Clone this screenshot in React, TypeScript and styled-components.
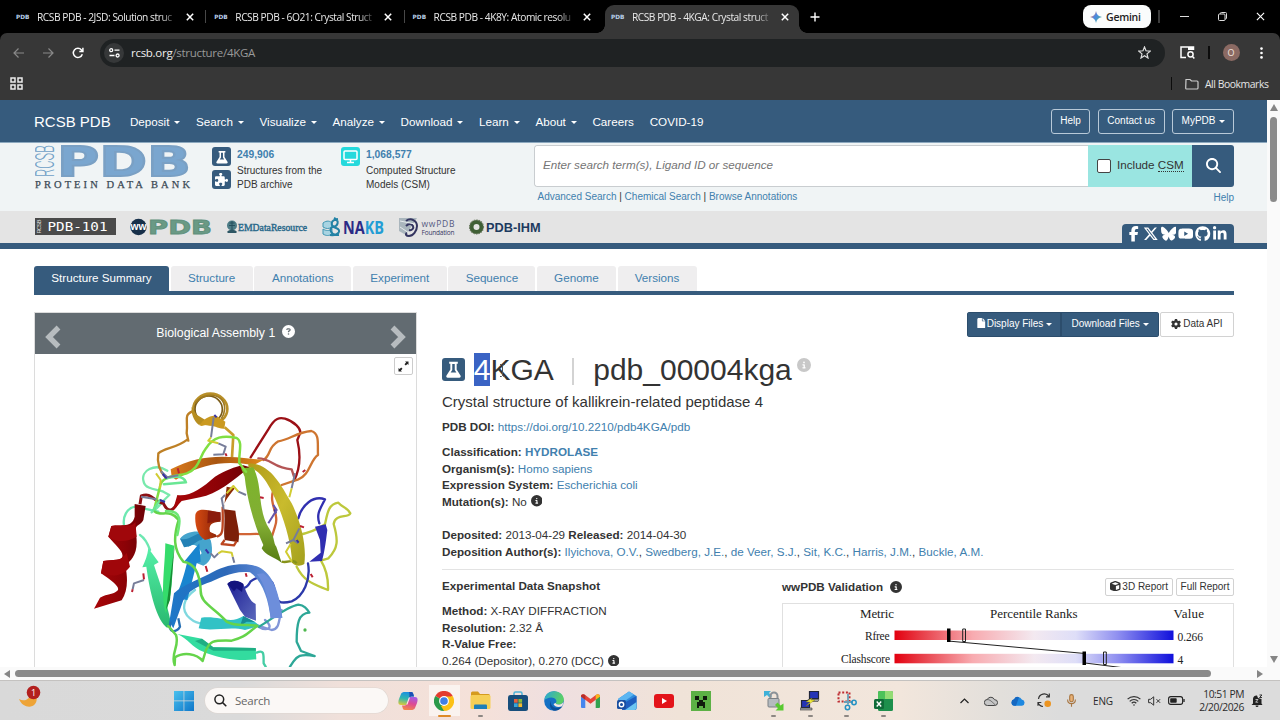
import React, { ReactNode } from "react";
import styled, { createGlobalStyle, css } from "styled-components";
import {
  FaBluesky,
  FaCircleInfo,
  FaCircleQuestion,
  FaCube,
  FaFacebookF,
  FaFile,
  FaGear,
  FaGithub,
  FaLinkedinIn,
  FaMagnifyingGlass,
  FaPuzzlePiece,
  FaXTwitter,
  FaYoutube,
} from "react-icons/fa6";

const colors = {
  navy: "#365b7d",
  link: "#4180ae",
  text: "#333",
  chrome: "#373737",
};

const browserTabs = [
  "RCSB PDB - 2JSD: Solution struc",
  "RCSB PDB - 6O21: Crystal Struct",
  "RCSB PDB - 4K8Y: Atomic resolu",
  "RCSB PDB - 4KGA: Crystal struct",
];

const navItems = [
  { title: "Deposit", menu: true },
  { title: "Search", menu: true },
  { title: "Visualize", menu: true },
  { title: "Analyze", menu: true },
  { title: "Download", menu: true },
  { title: "Learn", menu: true },
  { title: "About", menu: true },
  { title: "Careers", menu: false },
  { title: "COVID-19", menu: false },
];

const pageTabs = [
  { title: "Structure Summary", width: 135 },
  { title: "Structure", width: 82 },
  { title: "Annotations", width: 97 },
  { title: "Experiment", width: 94 },
  { title: "Sequence", width: 87 },
  { title: "Genome", width: 79 },
  { title: "Versions", width: 79 },
];

const authors = [
  "Ilyichova, O.V.",
  "Swedberg, J.E.",
  "de Veer, S.J.",
  "Sit, K.C.",
  "Harris, J.M.",
  "Buckle, A.M.",
];

/* ---------- small drawings ---------- */

const CloseIcon = ({ size = 8, stroke = 1.5 }: { size?: number; stroke?: number }) => (
  <svg width={size} height={size} viewBox="0 0 8 8">
    <path d="M.8.8 7.2 7.2M7.2.8.8 7.2" stroke="#fff" strokeWidth={stroke} fill="none" />
  </svg>
);

const FlaskIcon = ({ size }: { size: number }) => (
  <svg width={size} height={size} viewBox="0 0 24 24">
    <path
      d="M7.5 4h9v2h-1.2v6l4 6.2c.7 1.3 0 2.3-1.3 2.3H6c-1.300 0-2-1-1.300-2.300l4-6.200V6H7.500z"
      fill="#fff"
    />
    <path d="M10.700 6.200h2.600v6.300l1.700 2.700H9l1.700-2.700z" fill={colors.navy} />
  </svg>
);

const Chevron = ({ flip }: { flip?: boolean }) => (
  <svg width="18" height="24" viewBox="0 0 18 24">
    <path
      d={flip ? "M3.500 2.500 13 12 3.500 21.500" : "M14.500 2.500 5 12l9.500 9.500"}
      stroke="#b7bcbf"
      strokeWidth="5.400"
      fill="none"
    />
  </svg>
);

const Protein = () => (
  <svg width="280" height="287" viewBox="0 0 840 861" fill="none" strokeLinejoin="round">
    <defs>
      <linearGradient id="helix" x1="0" x2="1">
        <stop offset="0" stopColor="#a80508" />
        <stop offset=".6" stopColor="#8c0206" />
        <stop offset="1" stopColor="#6c0206" />
      </linearGradient>
      <linearGradient id="orange" x1="0" x2="1">
        <stop offset="0" stopColor="#d87a1c" />
        <stop offset=".5" stopColor="#a95510" />
        <stop offset="1" stopColor="#e08a1a" />
      </linearGradient>
      <linearGradient id="blue" x1="0" x2="1">
        <stop offset="0" stopColor="#1d78c8" />
        <stop offset=".5" stopColor="#2d68b8" />
        <stop offset="1" stopColor="#7596e2" />
      </linearGradient>
      <linearGradient id="olive" x1="0" y1="0" x2="1" y2="1">
        <stop offset="0" stopColor="#b09a18" />
        <stop offset=".5" stopColor="#c9bb2d" />
        <stop offset="1" stopColor="#a3a01d" />
      </linearGradient>
      <linearGradient id="lime" x1="0" y1="0" x2="0" y2="1">
        <stop offset="0" stopColor="#7cb52c" />
        <stop offset=".6" stopColor="#82ad33" />
        <stop offset="1" stopColor="#567b12" />
      </linearGradient>
      <linearGradient id="mint" x1="0" y1="0" x2="0" y2="1">
        <stop offset="0" stopColor="#55efa8" />
        <stop offset="1" stopColor="#28b86e" />
      </linearGradient>
      <linearGradient id="rust" x1="0" x2="1">
        <stop offset="0" stopColor="#d54a12" />
        <stop offset="1" stopColor="#852006" />
      </linearGradient>
      <linearGradient id="indigo" x1="0" y1="0" x2="1" y2="1">
        <stop offset="0" stopColor="#1c1c94" />
        <stop offset="1" stopColor="#5b69bc" />
      </linearGradient>
    </defs>

    {/* loops lying behind the sheets */}
    <g strokeWidth="7" strokeLinecap="round">
      <path d="M262 272C225 248 180 272 191 305C196 328 230 328 250 335L268 345C240 370 235 385 215 397" stroke="#78e9ac" />
      <path d="M235 395L165 380C140 385 128 410 132 435M180 465C195 475 203 490 210 510" stroke="#6de8b2" />
      <path d="M345 630C310 655 300 690 330 715C345 728 355 730 368 730" stroke="#7fd8df" />
      <path d="M555 720C585 745 560 755 535 740M605 690C595 720 600 748 575 750L530 735" stroke="#8296d8" />
      <path d="M512 232L565 148C585 112 600 112 615 116C645 126 662 145 661 158L652 180C665 235 656 275 642 302" stroke="#9b1016" />
      <path d="M550 240C575 225 560 205 595 184C630 178 650 157 694 153C720 162 712 190 714 225C690 240 690 285 655 298L605 315" stroke="#ce7530" />
      <path d="M535 235C575 235 580 265 635 268L642 290" stroke="#b45555" />
      <path d="M580 330C565 375 600 400 585 440L575 472C550 455 510 465 475 462" stroke="#d16536" />
      <path d="M655 415C665 375 700 345 735 358C722 385 708 400 718 430" stroke="#3130b0" />
      <path d="M654 465C685 460 710 450 735 433C742 400 745 372 775 368C790 385 800 380 811 400C805 415 765 400 761 432C775 480 775 505 745 535L723 542C743 575 745 605 744 630C710 615 675 610 650 560" stroke="#bdc83c" />
      <path d="M684 550C693 600 670 650 635 664C590 675 592 660 584 632C580 590 545 580 512 604C500 628 485 630 465 618" stroke="#2c39aa" />
      <path d="M537 740C580 715 620 680 655 674C673 676 680 685 688 698C655 700 650 730 650 785L663 813L704 828C660 820 650 830 640 845L630 860" stroke="#2da797" />
      <path d="M530 818C555 808 550 825 551 850L557 860" stroke="#45cda4" />
      <path d="M325 182L320 160C325 120 310 105 337 94M323 178C285 207 255 202 235 220C230 250 240 275 258 294" stroke="#be8026" />
    </g>

    {/* top coil */}
    <ellipse cx="391" cy="87" rx="51" ry="46" stroke="#b88f28" strokeWidth="8" />
    <ellipse cx="386" cy="88" rx="41" ry="40" stroke="#7b5c18" strokeWidth="5" />
    <path d="M346 70C365 45 400 38 422 56C440 72 435 100 424 116" stroke="#a07a20" strokeWidth="5" />
    <path d="M335 80C333 100 340 120 356 134C366 136 375 132 380 122L350 104Z" fill="#b78e20" />
    <path d="M358 136C370 118 390 104 410 108L436 125L433 146C410 148 395 128 365 138Z" fill="#ca9920" />
    <path d="M434 142L460 165L456 232" stroke="#c99d2b" strokeWidth="8" />

    {/* left red helix */}
    <path d="M164 372L197 378L190 420C180 438 169 432 166 450C180 520 155 538 136 557C145 600 142 635 125 661L42 686L60 653C85 640 95 645 110 634C125 625 100 605 63 580L70 543L122 538C140 520 110 500 85 470L94 438C125 432 155 445 164 410Z" fill="url(#helix)" />
    <path d="M94 438C125 432 155 445 166 425L170 470C145 485 110 490 85 470Z" fill="#a0070b" />
    <path d="M70 543C100 538 125 545 140 518L150 560C125 593 90 590 63 580Z" fill="#a0060a" />
    <path d="M180 373L184 348C215 335 220 365 250 370C265 400 280 395 294 365" stroke="#8c1015" strokeWidth="9" />

    {/* mint and green strands */}
    <path d="M205 505L236 547L222 555C240 610 260 665 272 725L262 744C230 720 210 640 199 560L187 562C195 545 203 525 205 505Z" fill="url(#mint)" />
    <path d="M256 490L283 497C275 560 280 600 270 650L258 700C240 650 255 560 256 490Z" fill="#35dc6b" />
    <path d="M258 690L285 485L270 660Z" fill="#178d35" />
    <path d="M292 762L366 776L400 802L527 804L529 838C470 845 410 832 370 815C335 803 325 776 292 762Z" fill="#33dc9f" />
    <path d="M345 783L366 776L400 802L527 804L528 812L400 812Z" fill="#1fae83" />
    <path d="M364 713C420 706 450 735 490 708L525 726L540 738L495 750C450 738 400 755 356 745Z" fill="#32c2c5" />
    <path d="M490 708L525 726L500 725L480 738Z" fill="#168b96" />

    {/* blue sheet */}
    <path d="M300 476C315 455 350 450 375 458L392 480C400 510 398 545 370 557L340 545L365 520C355 495 340 490 325 500Z" fill="#45a4cd" />
    <path d="M300 476C335 485 345 450 378 462L365 480C350 480 340 500 312 502Z" fill="#2381b5" />
    <path d="M358 490L362 545L350 550L322 660L285 655C310 600 315 570 322 545L314 543Z" fill="#1985cf" />
    <path d="M282 640C310 612 360 598 400 575C450 548 520 545 550 570C590 600 600 665 607 713L572 715C565 655 545 600 510 577C460 570 420 595 380 610C340 625 315 640 305 675L280 745L268 725Z" fill="url(#blue)" />
    <path d="M550 580C590 610 600 665 607 713L572 715C565 655 555 610 530 582Z" fill="#6d8edb" />
    <path d="M272 725C260 760 290 760 300 740L295 715" stroke="#266fb4" strokeWidth="7" />
    <path d="M442 612C455 596 475 602 490 612C500 640 510 665 527 672L528 722L495 710L480 690L455 640Z" fill="url(#indigo)" />
    <path d="M442 612C455 596 480 602 490 612L486 636L470 625L462 634Z" fill="#14147e" />

    {/* rust helix in the middle */}
    <path d="M346 405C350 385 370 385 420 398L422 425C395 425 385 435 390 455C400 462 410 460 411 470L375 480C350 465 344 430 346 405Z" fill="url(#rust)" />
    <path d="M384 392L422 397L422 420L382 430Z" fill="#8b1b0b" />
    <path d="M432 388L466 392C470 430 482 455 475 487L434 480C430 455 436 430 432 388Z" fill="#7c1f08" />
    <path d="M411 470C432 465 428 445 428 380M434 480L425 492L462 496L470 483" stroke="#bc4620" strokeWidth="7" />

    {/* upper sheet */}
    <path d="M272 268C340 232 400 226 470 232L550 240L520 256C440 240 370 252 310 286L288 299L275 290Z" fill="url(#orange)" />
    <path d="M510 262C460 300 410 345 360 352L305 363L278 393L292 345C330 350 365 325 405 290C435 272 465 260 490 256Z" fill="url(#helix)" />
    <path d="M465 325C440 355 430 370 431 390L440 320Z" fill="#8d2c08" />
    <path d="M505 250C570 250 600 310 635 370C665 430 680 500 673 552C660 560 645 558 636 548C635 480 600 380 570 325C550 285 525 265 505 262Z" fill="url(#olive)" />
    <path d="M483 265L520 262C550 320 530 390 570 450C585 475 580 490 589 500L605 548C580 530 555 525 545 505L550 495C520 430 500 350 494 290Z" fill="url(#lime)" />
    <path d="M737 433L742 450C737 490 733 520 726 543L688 545L722 518L720 480L705 440Z" fill="#302eb1" />
    <path d="M605 545C625 550 640 535 650 550" stroke="#87931a" strokeWidth="7" />

    {/* long lime thread */}
    <g strokeWidth="7.500" strokeLinecap="round">
      <path d="M498 275L478 250C475 220 490 185 470 174C430 165 400 170 378 205C355 235 360 265 320 280C290 290 245 285 240 320L222 390" stroke="#80df43" />
      <path d="M225 395C245 410 270 385 296 420C280 470 280 510 310 545C350 550 360 590 362 630C360 670 400 680 440 725C470 743 505 730 532 738C500 760 500 770 455 782C395 780 390 785 378 810L368 843C350 820 310 815 285 832L284 855C270 820 300 800 288 765L265 738" stroke="#65d44a" />
      <path d="M252 313L318 307C310 286 280 288 260 295M220 390L240 360" stroke="#69e794" />
      <path d="M258 393C310 390 300 430 292 465" stroke="#6ce775" />
    </g>

    {/* ligands and side chains */}
    <g strokeWidth="6">
      <path d="M401 112L393 172M415 190L437 200L430 223L400 224M243 274L262 292L295 286M475 335L498 345M435 345L425 355L431 388M645 280L635 325M658 445L640 480L655 490M640 480L618 490M183 350L230 358M192 600L162 610L158 628M392 520L403 532L415 520M458 530L463 548" stroke="#777d99" />
      <path d="M393 172L385 182L415 190M228 280L242 300L240 325M440 340L460 318L475 335M635 325L628 352M632 492L618 515L636 545M415 520L425 514L455 518L458 530" stroke="#d1cc32" />
      <path d="M293 265L297 280M436 220L440 228M540 352L551 354M660 438L672 442M190 580L192 598M158 628L156 636M377 558L382 575M497 580L500 590M668 276L676 270M692 582L698 592" stroke="#bb2032" />
      <path d="M403 105L410 112M377 508L386 520M583 388L588 400M248 282L260 296M650 480L656 488M240 360L255 366" stroke="#3632a7" />
      <path d="M565 430L590 390L580 375" stroke="#6554aa" />
    </g>
    <circle cx="675" cy="750" r="5" fill="#50b850" />
  </svg>
);

const PercentileChart = () => (
  <svg width="451" height="64" viewBox="0 0 451 64" fontFamily="'Liberation Serif', serif" fill="#222">
    <defs>
      <linearGradient id="rank" x1="0" x2="1">
        <stop offset="0" stopColor="#e3000f" />
        <stop offset=".1" stopColor="#e8404a" />
        <stop offset=".28" stopColor="#f8abb0" />
        <stop offset=".5" stopColor="#f3e9f0" />
        <stop offset=".65" stopColor="#dedef8" />
        <stop offset=".8" stopColor="#8f8ff0" />
        <stop offset="1" stopColor="#1010dc" />
      </linearGradient>
    </defs>
    <g fontSize="13">
      <text x="77" y="14" textLength="34">Metric</text>
      <text x="207" y="14" textLength="87.500">Percentile Ranks</text>
      <text x="390.500" y="14" textLength="30.500">Value</text>
    </g>
    <g fontSize="11.500">
      <text x="82" y="36.300" textLength="24.500">Rfree</text>
      <text x="58" y="59.300" textLength="49">Clashscore</text>
      <text x="394.500" y="36.500" textLength="25.500">0.266</text>
      <text x="394.500" y="59.500">4</text>
    </g>
    <rect x="111.500" y="26.500" width="279" height="9.500" fill="url(#rank)" />
    <rect x="111.500" y="49.800" width="279" height="9.500" fill="url(#rank)" />
    <path d="M165 37 302 49.500M302 59 342 64" stroke="#222" strokeWidth="1" />
    <path d="M164 24.500h3.500v13.500H164zM299.500 47.500h3.500V61h-3.500z" fill="#000" />
    <path d="M179.700 25h2.800v12.500h-2.800zM320.500 48h2.800v12.500h-2.800z" fill="none" stroke="#222" strokeWidth="1" />
  </svg>
);

/* ---------- browser chrome ---------- */

const BrowserTop = () => (
  <>
    <TabStrip>
      {browserTabs.map((title, i) => (
        <BrowserTab key={title} $active={i === 3} $divider={i < 2}>
          <Favicon>PDB</Favicon>
          <TabTitle>{title}</TabTitle>
          <CloseIcon />
        </BrowserTab>
      ))}
      <NewTab>
        <svg width="10" height="10" viewBox="0 0 10 10">
          <path d="M5 .5v9M.5 5h9" stroke="#fff" strokeWidth="1.400" />
        </svg>
      </NewTab>
      <WindowControls>
        <GeminiButton>
          <svg width="12" height="12" viewBox="0 0 12 12">
            <defs>
              <linearGradient id="gem" x1="0" y1="0" x2="1" y2=".7">
                <stop offset=".2" stopColor="#e8795c" />
                <stop offset=".5" stopColor="#4787e6" />
                <stop offset="1" stopColor="#4fae94" />
              </linearGradient>
            </defs>
            <path d="M6 0c.5 3.500 2.500 5.500 6 6-3.500.5-5.500 2.500-6 6-.5-3.500-2.500-5.500-6-6 3.500-.5 5.500-2.500 6-6z" fill="url(#gem)" />
          </svg>
          Gemini
        </GeminiButton>
        <ChromeDivider $color="#3c3c3c" />
        <WindowButton>
          <svg width="9" height="9" viewBox="0 0 9 9"><path d="M0 4.500h9" stroke="#ddd" /></svg>
        </WindowButton>
        <WindowButton>
          <svg width="9" height="9" viewBox="0 0 9 9" fill="none" stroke="#ddd">
            <rect x=".5" y="2" width="6.500" height="6.500" rx="1" />
            <path d="M2.300 2V1.500a1 1 0 0 1 1-1h4.200a1 1 0 0 1 1 1V6a1 1 0 0 1-1 1H7" />
          </svg>
        </WindowButton>
        <WindowButton><CloseIcon size={9} stroke={1} /></WindowButton>
      </WindowControls>
    </TabStrip>

    <Toolbar>
      <ToolIcon>
        <svg width="11" height="10" viewBox="0 0 11 10" fill="none" stroke="#898989" strokeWidth="1.200">
          <path d="M11 5H1M5.500.5 1 5l4.500 4.500" />
        </svg>
      </ToolIcon>
      <ToolIcon>
        <svg width="11" height="10" viewBox="0 0 11 10" fill="none" stroke="#898989" strokeWidth="1.200">
          <path d="M0 5h10M5.500.5 10 5 5.500 9.500" />
        </svg>
      </ToolIcon>
      <ToolIcon>
        <svg width="12" height="12" viewBox="0 0 12 12" fill="none" stroke="#fff" strokeWidth="1.500">
          <path d="M10.300 7.300A4.600 4.600 0 1 1 9.500 3L10.700 4.200M10.900.800V4.400H7.300" />
        </svg>
      </ToolIcon>
      <AddressBar>
        <SiteInfo>
          <svg width="11" height="10" viewBox="0 0 11 10" fill="none" stroke="#fff" strokeWidth="1.300">
            <circle cx="2.200" cy="2.200" r="1.500" />
            <path d="M5.500 2.200H10.500M.5 7.500h5" />
            <circle cx="8.600" cy="7.500" r="1.500" />
          </svg>
        </SiteInfo>
        <Url>
          rcsb.org<span>/structure/4KGA</span>
        </Url>
        <svg width="13" height="13" viewBox="0 0 13 13" fill="none" stroke="#ddd" strokeWidth="1.200">
          <path d="m6.500 1 1.500 3.800 4.200.3L9 7.900l1 4.100-3.500-2.300L3 12l1-4.100L.8 5.100 5 4.800z" />
        </svg>
      </AddressBar>
      <ToolbarEnd>
        <svg width="15" height="13" viewBox="0 0 15 13" fill="none" stroke="#fff" strokeWidth="1.500">
          <path d="M6 11.500H1V1h12.500v3" />
          <path d="M8 1h6v3H8z" fill="#fff" stroke="none" />
          <circle cx="10.500" cy="8.300" r="2.600" />
          <path d="m12.300 10.300 2 2.200" />
        </svg>
        <ChromeDivider $color="#0c0c0c" />
        <Avatar>O</Avatar>
        <svg width="3" height="12" viewBox="0 0 3 12" fill="#fff">
          <circle cx="1.500" cy="1.600" r="1.300" />
          <circle cx="1.500" cy="6" r="1.300" />
          <circle cx="1.500" cy="10.400" r="1.300" />
        </svg>
      </ToolbarEnd>
    </Toolbar>

    <BookmarkBar>
      <svg width="13" height="13" viewBox="0 0 13 13" fill="none" stroke="#ececec" strokeWidth="1.500">
        <path d="M1 1h4v4H1zM8 1h4v4H8zM1 8h4v4H1zM8 8h4v4H8z" />
      </svg>
      <AllBookmarks>
        <ChromeDivider $color="#0c0c0c" />
        <svg width="14" height="12" viewBox="0 0 14 12" fill="none" stroke="#ccc" strokeWidth="1.200">
          <path d="M1 1.500h4l1.500 1.500H12a1 1 0 0 1 1 1v6a1 1 0 0 1-1 1H1.500a.8.8 0 0 1-.8-.8z" />
        </svg>
        <span>All Bookmarks</span>
      </AllBookmarks>
    </BookmarkBar>
  </>
);

/* ---------- site header ---------- */

const PdbLogo = () => (
  <svg width="156" height="45" viewBox="0 0 156 45">
    <text transform="translate(18.500 32) rotate(-90)" fontFamily="Roboto, sans-serif" fontSize="25" fontWeight="300" fill="#6f9fc6" textLength="32" lengthAdjust="spacingAndGlyphs">RCSB</text>
    <text x="22" y="31" fontFamily="'DejaVu Sans', sans-serif" fontWeight="bold" fontSize="41" fill="#7aa6cf" stroke="#7aa0c4" strokeWidth="1.800" textLength="134" lengthAdjust="spacingAndGlyphs">PDB</text>
    <text x="0" y="42.500" fontFamily="'Liberation Serif', serif" fontSize="10.500" fill="#3c4a55" stroke="#3c4a55" strokeWidth=".25" textLength="155">PROTEIN DATA BANK</text>
  </svg>
);

const PartnerLogos = () => (
  <Partners>
    <svg width="81" height="17" viewBox="0 0 81 17">
      <rect width="81" height="17" fill="#4a4a4a" />
      <text transform="translate(6 15.500) rotate(-90)" fontFamily="'Liberation Sans', sans-serif" fontSize="6" fill="#ddd" textLength="14">RCSB</text>
      <text x="12.500" y="13" fontFamily="'DejaVu Sans Mono', monospace" fontSize="12.500" fill="#fff" textLength="60" lengthAdjust="spacingAndGlyphs">PDB-101</text>
    </svg>
    <svg width="82" height="18" viewBox="0 0 82 18">
      <circle cx="8.500" cy="9" r="8.200" fill="#17304a" />
      <text x=".5" y="12" fontFamily="'Liberation Sans', sans-serif" fontWeight="bold" fontSize="10" fill="#fff" textLength="16" lengthAdjust="spacingAndGlyphs">ww</text>
      <text x="18" y="15.500" fontFamily="'DejaVu Sans', sans-serif" fontWeight="bold" fontSize="19" fill="#6a9a85" stroke="#5f8f7b" strokeWidth=".8" textLength="64" lengthAdjust="spacingAndGlyphs">PDB</text>
    </svg>
    <svg width="82" height="16" viewBox="0 0 82 16">
      <circle cx="6" cy="6.500" r="5" fill="#4d7c86" />
      <path d="M1 13c2-3 8-3 10 0l-1 1H2z" fill="#2d5664" />
      <path d="M3 6.500h6M6 2v9M3.500 4h5" stroke="#27505e" fill="none" />
      <text x="12" y="11.500" fontFamily="'Liberation Serif', serif" fontSize="10" fill="#28688a" stroke="#28688a" strokeWidth=".4" textLength="69" lengthAdjust="spacingAndGlyphs">EMDataResource</text>
    </svg>
    <svg width="62" height="22" viewBox="0 0 62 22">
      <path d="M1 7c4-3 7-2 9 0v4c-3 2-6 2-9 0zM1 13c3 2 6 2 9 0v5c-3 2-6 2-9 0z" fill="#a8d4e2" stroke="#3f96b2" />
      <path d="M12 2c6 3 4 8-1 9s-2 9 6 8M16 3c-8 1-8 7-2 9s3 8-6 7" fill="none" stroke="#2382a5" strokeWidth="2" />
      <text x="21" y="17.500" fontFamily="'Open Sans', sans-serif" fontWeight="bold" fontSize="18" textLength="41" lengthAdjust="spacingAndGlyphs"><tspan fill="#2b2a86">NA</tspan><tspan fill="#239dd5">KB</tspan></text>
    </svg>
    <svg width="57" height="22" viewBox="0 0 57 22">
      <path d="M1 2h18L8 19 1 15z" fill="#aab6bd" />
      <path d="M8 5c5-4 11 0 11 5s-4 10-8 10c-3 0-4-2-2-3M8 10c3-3 6-2 7 0s-1 5-4 4" fill="none" stroke="#343560" strokeWidth="2" />
      <path d="M2 5 17 8M2 11l9 6" stroke="#e8ecee" />
      <text x="23.500" y="10.500" fontFamily="'Open Sans', sans-serif" fontSize="8.500" fill="#565a82" textLength="33">wwPDB</text>
      <text x="23.500" y="18.800" fontFamily="'Open Sans', sans-serif" fontSize="6.500" fill="#35385f" textLength="33">Foundation</text>
    </svg>
    <svg width="72" height="16" viewBox="0 0 72 16">
      <circle cx="7.500" cy="8" r="5" fill="none" stroke="#3f5f35" strokeWidth="4" />
      <circle cx="7.500" cy="8" r="7" fill="none" stroke="#6c7a62" strokeWidth="1.200" strokeDasharray="1.500 1" />
      <text x="17" y="12.700" fontFamily="'Liberation Sans', sans-serif" fontWeight="bold" fontSize="12.500" fill="#1d3a5f" textLength="54.500" lengthAdjust="spacingAndGlyphs">PDB-IHM</text>
    </svg>
  </Partners>
);

const SiteHeader = () => (
  <>
    <NavBar>
      <Brand>RCSB PDB</Brand>
      {navItems.map(({ title, menu }) => (
        <NavItem key={title}>
          {title}
          {menu && <Caret />}
        </NavItem>
      ))}
      <NavButtons>
        <OutlineButton>Help</OutlineButton>
        <OutlineButton>Contact us</OutlineButton>
        <OutlineButton>
          MyPDB
          <Caret />
        </OutlineButton>
      </NavButtons>
    </NavBar>

    <Masthead>
      <PdbLogo />
      <Stat $width={129}>
        <BadgeColumn>
          <Badge $size={19}><FlaskIcon size={18} /></Badge>
          <Badge $size={19}><FaPuzzlePiece size={13} /></Badge>
        </BadgeColumn>
        <StatText>
          <strong>249,906</strong>
          Structures from the
          <br />
          PDB archive
        </StatText>
      </Stat>
      <Stat $width={193}>
        <BadgeColumn>
          <Badge $size={19} $cyan>
            <svg width="15" height="14" viewBox="0 0 15 14" fill="none" stroke="#fff" strokeWidth="1.500">
              <rect x="1" y="1" width="13" height="8.500" rx="1" />
              <path d="M4 12.500h7M7.500 10v2" />
            </svg>
          </Badge>
        </BadgeColumn>
        <StatText>
          <strong>1,068,577</strong>
          Computed Structure
          <br />
          Models (CSM)
        </StatText>
      </Stat>
      <SearchArea>
        <SearchBox>
          <SearchInput>Enter search term(s), Ligand ID or sequence</SearchInput>
          <CsmToggle>
            <Checkbox />
            <span>
              Include <abbr>CSM</abbr>
            </span>
          </CsmToggle>
          <SearchButton><FaMagnifyingGlass size={15} /></SearchButton>
        </SearchBox>
        <SearchLinks>
          <span>
            <Link>Advanced Search</Link> | <Link>Chemical Search</Link> | <Link>Browse Annotations</Link>
          </span>
          <HelpLink>Help</HelpLink>
        </SearchLinks>
      </SearchArea>
    </Masthead>

    <PartnerBar>
      <PartnerLogos />
      <Social>
        <FaFacebookF />
        <FaXTwitter />
        <FaBluesky />
        <FaYoutube />
        <FaGithub />
        <FaLinkedinIn />
      </Social>
    </PartnerBar>
  </>
);

/* ---------- entry page ---------- */

const Field = ({ label, children }: { label: string; children?: ReactNode }) => (
  <Line>
    <strong>{label}</strong> {children}
  </Line>
);

const StructurePage = () => (
  <>
    <PageTabs>
      {pageTabs.map(({ title, width }, i) => (
        <PageTab key={title} $active={i === 0} $width={width}>{title}</PageTab>
      ))}
    </PageTabs>
    <Entry>
      <Viewer>
        <ViewerHeader>
          <Chevron />
          <span>
            Biological Assembly 1 <FaCircleQuestion size={13} />
          </span>
          <Chevron flip />
        </ViewerHeader>
        <ExpandButton>
          <svg width="11" height="11" viewBox="0 0 11 11" fill="#222">
            <path d="M7 .500h3.500V4L9.400 2.900 7.800 4.500 6.500 3.200 8.100 1.600zM4 10.500H.5V7l1.100 1.100L3.200 6.500 4.500 7.800 2.900 9.400z" />
          </svg>
        </ExpandButton>
        <ProteinFrame><Protein /></ProteinFrame>
      </Viewer>

      <Details>
        <FileActions>
          <FileGroup>
            <FileButton $width={94}>
              <FaFile size={10.500} /> Display Files <Caret />
            </FileButton>
            <FileButton $width={98}>
              Download Files <Caret />
            </FileButton>
          </FileGroup>
          <PlainButton $width={74} $height={25}>
            <FaGear size={10} /> Data API
          </PlainButton>
        </FileActions>

        <EntryTitle>
          <Badge $size={23}><FlaskIcon size={23} /></Badge>
          <EntryId>
            <mark>4</mark>KGA
            <TextCursor>
              <svg width="5" height="13" viewBox="0 0 5 13" fill="none" stroke="#555">
                <path d="M0 .5h1.500l1 1 1-1H5M2.500 1.500v10M0 12.500h1.500l1-1 1 1H5" />
              </svg>
            </TextCursor>
          </EntryId>
          <Bar />
          <span>pdb_00004kga</span>
          <FaCircleInfo size={14} color="#c8c8c8" />
        </EntryTitle>
        <Subtitle>Crystal structure of kallikrein-related peptidase 4</Subtitle>
        <Block $gap={8.700}>
          <Field label="PDB DOI:"><Link>https://doi.org/10.2210/pdb4KGA/pdb</Link></Field>
        </Block>
        <Block $gap={16.700}>
          <Field label="Classification:"><Link $bold>HYDROLASE</Link></Field>
          <Field label="Organism(s):"><Link>Homo sapiens</Link></Field>
          <Field label="Expression System:"><Link>Escherichia coli</Link></Field>
          <Field label="Mutation(s):">
            No <InfoIcon />
          </Field>
        </Block>
        <Block $gap={8.500}>
          <Line>
            <strong>Deposited:</strong> 2013-04-29 <strong>Released:</strong> 2014-04-30
          </Line>
          <Field label="Deposition Author(s):">
            {authors.map((name, i) => (
              <React.Fragment key={name}>
                {i > 0 && ", "}
                <Link>{name}</Link>
              </React.Fragment>
            ))}
          </Field>
        </Block>

        <Snapshot>
          <Experiment>
            <SectionTitle>Experimental Data Snapshot</SectionTitle>
            <Field label="Method:">X-RAY DIFFRACTION</Field>
            <Field label="Resolution:">2.32 Å</Field>
            <Field label="R-Value Free:" />
            <Line>
              0.264 (Depositor), 0.270 (DCC) <InfoIcon />
            </Line>
          </Experiment>
          <Validation>
            <ValidationHeader>
              <strong>wwPDB Validation</strong>
              <FaCircleInfo size={12} color="#333" />
              <Reports>
                <PlainButton $width={68} $height={18}>
                  <FaCube size={10.500} /> 3D Report
                </PlainButton>
                <PlainButton $width={58} $height={18}>Full Report</PlainButton>
              </Reports>
            </ValidationHeader>
            <ChartBox><PercentileChart /></ChartBox>
          </Validation>
        </Snapshot>
      </Details>
    </Entry>
  </>
);

/* ---------- taskbar ---------- */

const CopilotIcon = () => (
  <svg width="20" height="20" viewBox="0 0 20 20">
    <defs>
      <linearGradient id="copLeft" x1=".5" y1="0" x2=".3" y2="1">
        <stop offset="0" stopColor="#1c8fe0" />
        <stop offset=".5" stopColor="#2fb6b0" />
        <stop offset="1" stopColor="#d9c93c" />
      </linearGradient>
      <linearGradient id="copRight" x1=".7" y1="0" x2=".4" y2="1">
        <stop offset="0" stopColor="#a45be6" />
        <stop offset=".5" stopColor="#dd4a93" />
        <stop offset="1" stopColor="#f3834d" />
      </linearGradient>
    </defs>
    <path d="M7 1h6c2 0 2 1 2.600 3l.4 1.500h-2.500c-1.500 0-2 .8-2.500 2.500L9.500 12c-.5 1.500-1 2-2.500 2H3C0 14 0 11 1 8l2-5c.6-1.500 2-2 4-2z" fill="url(#copLeft)" />
    <path d="M13 19H7c-2 0-2-1-2.600-3L4 14.500h2.500c1.500 0 2-.8 2.500-2.500l1.500-4c.5-1.500 1-2 2.500-2h4c3 0 3 3 2 6l-2 5c-.6 1.500-2 2-4 2z" fill="url(#copRight)" />
    <path d="M11 1h2c2 0 2 1 2.600 3l.4 1.500h-2.500c-1 0-1.700.5-2 1.500C11 5 12 3 11 1z" fill="#1d4fb5" />
    <path d="M8.300 13.500 10.800 6.500h1.200L9.500 13.500z" fill="#fbe9e4" />
  </svg>
);

const ChromeIcon = () => (
  <svg width="20" height="20" viewBox="0 0 20 20">
    <path d="M10 10 1.300 5A10 10 0 0 1 18.700 5z" fill="#e33b2e" />
    <path d="M10 10 1.300 5A10 10 0 0 0 10 20z" fill="#2a9a49" />
    <path d="M10 10 18.700 5A10 10 0 0 1 10 20z" fill="#fbc116" />
    <path d="M10 5.500h8.900L14 12.300zM14 12.200 10 20 7 15z" fill="#fbc116" />
    <circle cx="10" cy="10" r="4.900" fill="#fff" />
    <circle cx="10" cy="10" r="3.800" fill="#3f7fe6" />
  </svg>
);

const FolderIcon = () => (
  <svg width="21" height="19" viewBox="0 0 21 19">
    <path d="M1 2q0-1.500 1.500-1.500H8L10 3h8.500Q20 3 20 4.500V8H1z" fill="#d59b1e" />
    <rect x=".5" y="4" width="20" height="14" rx="1.500" fill="#f6cf56" />
    <path d="M4 18v-3.500q0-1 1-1h11q1 0 1 1V18z" fill="#1f7fb8" />
  </svg>
);

const StoreIcon = () => (
  <svg width="20" height="20" viewBox="0 0 20 20">
    <path d="M6 5V2.500Q6 1 7.500 1h5Q14 1 14 2.500V5" fill="none" stroke="#4eb3d8" strokeWidth="1.500" />
    <rect y="4" width="20" height="16" rx="2.500" fill="#174e7c" />
    <path d="M6 8h3.700v3.700H6z" fill="#e8603b" />
    <path d="M10.400 8h3.700v3.700h-3.700z" fill="#8ab83a" />
    <path d="M6 12.300h3.700V16H6z" fill="#38a5d9" />
    <path d="M10.400 12.300h3.700V16h-3.700z" fill="#f3bb31" />
  </svg>
);

const EdgeIcon = () => (
  <svg width="20" height="20" viewBox="0 0 20 20">
    <defs>
      <linearGradient id="edge" x1="0" y1="0" x2="1" y2=".3">
        <stop offset="0" stopColor="#2aa5d8" />
        <stop offset="1" stopColor="#5bd066" />
      </linearGradient>
    </defs>
    <circle cx="10" cy="10" r="9.800" fill="#1470c4" />
    <path d="M.3 9C1 3.500 5 .2 10 .2c6 0 9.800 4 9.800 8.300 0 3.500-2.500 5-5.500 5-2 0-3-.7-2.300-1.700C13.500 9.500 11 6.500 7.500 6.500 4 6.500 1.500 8 .3 9z" fill="url(#edge)" />
    <path d="M8 8.500c-3 3.500 0 8.500 5 8.500 2 0 4-.7 5.500-2-1.500 2.500-4 4.500-7 4.800C6 19.500 4 13 8 8.500z" fill="#0c4f98" />
    <path d="M12 11.800c-.7 1 .3 1.700 2.300 1.700 2 0 4-.6 5-2.300-.3 2-.6 3-1.300 4-3 1.500-7.500 1-8.500-2.200z" fill="#f4e9e2" />
  </svg>
);

const GmailIcon = () => (
  <svg width="19" height="14" viewBox="0 0 19 14">
    <path d="M0 2v11q0 1 1 1h3.300V5z" fill="#4686ee" />
    <path d="M19 2v11q0 1-1 1h-3.300V5z" fill="#32a351" />
    <path d="M0 2.500C0 .3 2.200-.4 3.800.8L9.500 5 15.200.8C16.800-.4 19 .3 19 2.500L9.500 9.800z" fill="#e6443a" />
    <path d="M19 2.500C19 .3 16.800-.4 15.200.8L14.700 1.200V5.800z" fill="#f6b91a" />
    <path d="M0 2.500C0 .3 2.200-.4 3.800.8l.5.4v4.600z" fill="#b52d29" />
  </svg>
);

const OutlookIcon = () => (
  <svg width="20" height="20" viewBox="0 0 20 20">
    <path d="M1 8 12 0.500 19.500 5v12q0 2-2 2H7z" fill="#2f8bdc" />
    <path d="M1 8 12 .5l5 3L5 12z" fill="#5cb6f2" />
    <path d="m5 13 14.500-8v12q0 2-2 2H5z" fill="#1e5fc0" />
    <path d="m8 19 11.500-8v6q0 2-2 2z" fill="#6dc6f1" />
    <rect x="0" y="9" width="9" height="9" rx="1.500" fill="#1a4fa0" />
    <circle cx="4.500" cy="13.500" r="2.200" fill="none" stroke="#fff" strokeWidth="1.400" />
  </svg>
);

const YoutubeIcon = () => (
  <svg width="20" height="14" viewBox="0 0 20 14">
    <rect width="20" height="14" rx="3" fill="#e3141a" />
    <path d="M8 4v6l5-3z" fill="#fff" />
  </svg>
);

const CreeperIcon = () => (
  <svg width="20" height="20" viewBox="0 0 20 20">
    <rect width="20" height="20" fill="#5cb145" />
    <path d="M4 5h4v4H4zM12 5h4v4h-4zM8 9h4v2h2v6h-2v-2H8v2H6v-6h2z" fill="#101c0d" />
  </svg>
);

const LockTransferIcon = () => (
  <svg width="21" height="20" viewBox="0 0 21 20">
    <path d="M1 0h7L6 2l3 3-2 2-3-3-3 2z" fill="#3eb1d8" />
    <path d="M7.500 8V5a3.500 3.500 0 0 1 7 0v3" fill="none" stroke="#8b9298" strokeWidth="2" />
    <rect x="5" y="7.500" width="11" height="8.500" rx="1" fill="#b4babf" stroke="#7a8085" />
    <path d="M20.500 19.500h-8l2.500-2.500-3-3 2.500-2.500 3 3 3-2z" fill="#59c930" />
  </svg>
);

const PuttyIcon = () => (
  <svg width="20" height="20" viewBox="0 0 20 20">
    <path d="M9.500.5h9v7h-9zM1.500 9.500h8v7h-8z" fill="#2433b6" stroke="#20253a" strokeWidth="1.200" />
    <path d="M8 8.500h11l-1 2H8zM0 17h12v2H0z" fill="#a4a6aa" stroke="#3a3a3a" strokeWidth=".6" />
    <path d="M12 7 6 11h4l-4 4 9-6h-4z" fill="#f2ea3a" stroke="#77721a" strokeWidth=".4" />
  </svg>
);

const SnipIcon = () => (
  <svg width="20" height="20" viewBox="0 0 20 20" fill="none">
    <path d="M1.500 1.500h11v9h-11z" stroke="#be2d32" strokeWidth="2" strokeDasharray="2 1.700" />
    <path d="M11 3v10.500M7 11h9" stroke="#6a9fb7" strokeWidth="1.800" />
    <circle cx="10.500" cy="16.500" r="2.200" stroke="#2692c3" strokeWidth="1.500" />
    <circle cx="17" cy="11.500" r="2.200" stroke="#2692c3" strokeWidth="1.500" />
  </svg>
);

const ExcelIcon = () => (
  <svg width="19" height="20" viewBox="0 0 19 20">
    <rect x="4" y="0" width="15" height="20" rx="1.500" fill="#1d8f4c" />
    <path d="M4 1.500Q4 0 5.500 0H11v8H4z" fill="#4cc25a" />
    <path d="M11 0h6.500Q19 0 19 1.500V8h-8z" fill="#93dc75" />
    <rect y="8" width="10" height="10" rx="1.500" fill="#0f6b38" />
    <path d="m2.700 10.500 4.500 5M7.200 10.500l-4.500 5" stroke="#fff" strokeWidth="1.400" />
  </svg>
);

const pinned = [
  { id: "copilot", icon: <CopilotIcon /> },
  { id: "chrome", icon: <ChromeIcon />, active: true },
  { id: "files", icon: <FolderIcon />, running: true },
  { id: "store", icon: <StoreIcon /> },
  { id: "edge", icon: <EdgeIcon /> },
  { id: "gmail", icon: <GmailIcon /> },
  { id: "outlook", icon: <OutlookIcon /> },
  { id: "youtube", icon: <YoutubeIcon /> },
  { id: "minecraft", icon: <CreeperIcon /> },
  { id: "gap", icon: null },
  { id: "winscp", icon: <LockTransferIcon />, running: true },
  { id: "putty", icon: <PuttyIcon />, running: true },
  { id: "snip", icon: <SnipIcon />, running: true },
  { id: "excel", icon: <ExcelIcon />, running: true },
];

const Taskbar = () => (
  <TaskbarRoot>
    <Weather>
      <svg width="22" height="25" viewBox="0 0 22 25">
        <path d="M0 15c5 3 10 1 13-6 5 2 6 7 3 11-4 5-13 3-16-5z" fill="#eea437" />
        <circle cx="14.500" cy="8.500" r="6.800" fill="#b3201f" />
        <text x="14.500" y="12" fontFamily="'Open Sans', sans-serif" fontSize="9" fill="#fff" textAnchor="middle">1</text>
      </svg>
    </Weather>
    <svg width="20" height="20" viewBox="0 0 20 20">
      <defs>
        <linearGradient id="win" x1="0" y1="0" x2="1" y2="1">
          <stop offset="0" stopColor="#49c1ee" />
          <stop offset="1" stopColor="#0f76c9" />
        </linearGradient>
      </defs>
      <path d="M0 0h9.600v9.600H0zM10.300 0H20v9.600h-9.700zM0 10.300h9.600V20H0zM10.300 10.300H20V20h-9.700z" fill="url(#win)" />
    </svg>
    <TaskSearch>
      <svg width="13" height="13" viewBox="0 0 13 13" fill="none" stroke="#222" strokeWidth="1.500">
        <circle cx="5.300" cy="5.300" r="4.400" />
        <path d="m8.600 8.600 3.700 3.700" />
      </svg>
      Search
    </TaskSearch>
    {pinned.map(({ id, icon, active, running }) => (
      <TaskItem key={id} $active={active} $running={running}>{icon}</TaskItem>
    ))}
    <Tray>
      <TrayCell $width={27}>
        <svg width="9" height="6" viewBox="0 0 9 6" fill="none" stroke="#222" strokeWidth="1.200"><path d="M.5 5 4.500 1l4 4" /></svg>
      </TrayCell>
      <TrayCell $width={26.500}>
        <svg width="14" height="10" viewBox="0 0 14 10" fill="#c6c6c6" stroke="#444">
          <path d="M3.500 9.500a3 3 0 0 1-.3-6 4 4 0 0 1 7.300.2 2.900 2.900 0 0 1 .3 5.800z" />
          <path d="M3 3.700c2-.5 4 1 8 5" fill="none" strokeWidth=".7" />
        </svg>
      </TrayCell>
      <TrayCell $width={26.500}>
        <svg width="14" height="10" viewBox="0 0 14 10">
          <path d="M3.500 9.800a3.300 3.300 0 0 1-.3-6.500 4.300 4.300 0 0 1 7.600.2 3.200 3.200 0 0 1 .2 6.300z" fill="#1e88e0" />
          <path d="M3 3.300A4 4 0 0 1 8 1.200L5 9.800H3.500A3.300 3.300 0 0 1 3 3.300z" fill="#1567c1" />
        </svg>
      </TrayCell>
      <TrayCell $width={27}>
        <svg width="15" height="15" viewBox="0 0 15 15" fill="none" stroke="#333" strokeWidth="1.200">
          <path d="M1.500 6A5.800 5.800 0 0 1 12 3.500M12.300.5v3.300H9M1 9.500a5.800 5.800 0 0 0 5 4M1 12.800V9.500h3.300" />
          <circle cx="10.700" cy="10.700" r="3.300" fill="#ec9420" stroke="none" />
        </svg>
      </TrayCell>
      <TrayCell $width={27}>
        <svg width="9" height="13" viewBox="0 0 9 13" fill="none" stroke="#a87642" strokeWidth="1.100">
          <rect x="2.700" y=".6" width="3.600" height="7.200" rx="1.800" fill="#e9b277" />
          <path d="M.6 5.500c0 5.500 7.800 5.500 7.800 0M4.500 9.700v3" />
        </svg>
      </TrayCell>
      <TrayCell $width={36}>ENG</TrayCell>
      <TrayCell $width={26}>
        <svg width="14" height="11" viewBox="0 0 14 11" fill="none" stroke="#333" strokeWidth="1.200">
          <path d="M.6 4.200a9 9 0 0 1 12.800 0M2.700 6.300a6 6 0 0 1 8.600 0M4.700 8.200a3.300 3.300 0 0 1 4.600 0" />
          <circle cx="7" cy="10" r=".8" fill="#333" stroke="none" />
        </svg>
      </TrayCell>
      <TrayCell $width={15}>
        <svg width="13" height="10" viewBox="0 0 13 10" fill="none" stroke="#333">
          <path d="M.6 3.300h2L5.700.8v8.400L2.600 6.700h-2zM8.500 3.200l3.600 3.600M12.100 3.200 8.500 6.800" />
        </svg>
      </TrayCell>
      <TrayCell $width={28}>
        <svg width="17" height="9" viewBox="0 0 17 9">
          <rect x=".6" y=".6" width="14" height="7.800" rx="2.200" fill="none" stroke="#222" strokeWidth="1.100" />
          <rect x="2.200" y="2.200" width="6.500" height="4.600" rx=".8" fill="#222" />
          <path d="M16 3v3" stroke="#222" strokeWidth="1.300" />
        </svg>
      </TrayCell>
      <Clock>
        10:51 PM
        <br />
        2/20/2026
      </Clock>
      <svg width="12" height="13" viewBox="0 0 12 13">
        <path d="M2 9.500V5a3.500 3.500 0 0 1 4-3.500L7 4l3.500 1v4.500L11.500 11H.5zM4.500 11.500h3a1.500 1.500 0 0 1-3 0z" fill="#222" />
        <path d="M5 5.500h2L5 8h2M8.500 1h2.500l-2.500 2.500H11" fill="none" stroke="#222" strokeWidth=".9" />
        <path d="M4.500 5.500h2.500L4.700 8.200H7.200" fill="none" stroke="#ddd" strokeWidth=".8" />
      </svg>
    </Tray>
  </TaskbarRoot>
);

const Arrow = ({ d, size }: { d: string; size: [number, number] }) => (
  <svg width={size[0]} height={size[1]} viewBox={`0 0 ${size[0]} ${size[1]}`}>
    <path d={d} fill="#858585" />
  </svg>
);

const App = () => (
  <Screen>
    <GlobalStyle />
    <BrowserTop />
    <Viewport>
      <Page>
        <SiteHeader />
        <StructurePage />
      </Page>
      <VScroll>
        <Arrow d="M4 0 8 7H0z" size={[8, 7]} />
        <VThumb />
        <Arrow d="M4 7 8 0H0z" size={[8, 7]} />
      </VScroll>
    </Viewport>
    <HScroll>
      <Arrow d="M0 4 6 0v8z" size={[6, 8]} />
      <HThumb />
      <Arrow d="M6 4 0 0v8z" size={[6, 8]} />
    </HScroll>
    <Taskbar />
  </Screen>
);

const GlobalStyle = createGlobalStyle`
  *, *::before, *::after {
    box-sizing: border-box;
  }
  body {
    margin: 0;
    overflow: hidden;
    background: #000;
  }
  svg {
    flex: none;
  }
`;

const uiFont = css`
  font-family: "Open Sans", "Noto Sans", sans-serif;
`;

const Screen = styled.div`
  width: 1280px;
  height: 720px;
  display: flex;
  flex-direction: column;
  overflow: hidden;
  background: #000;
`;

const TabStrip = styled.div`
  ${uiFont}
  flex: none;
  height: 33px;
  display: flex;
  align-items: stretch;
  padding: 0 1px 0 10px;
  color: #e8e8e8;
`;

const BrowserTab = styled.div<{ $active: boolean; $divider: boolean }>`
  position: relative;
  flex: none;
  width: 198.300px;
  display: flex;
  align-items: center;
  padding-left: 6px;

  ${({ $divider }) =>
    $divider &&
    css`
      &::after {
        content: "";
        position: absolute;
        right: 2px;
        top: 10px;
        width: 1px;
        height: 13px;
        background: #484848;
      }
    `}

  ${({ $active }) =>
    $active &&
    css`
      width: 194px;
      margin-top: 5px;
      padding-bottom: 5px;
      background: ${colors.chrome};
      border-radius: 9px 9px 0 0;

      &::before,
      &::after {
        content: "";
        position: absolute;
        bottom: 0;
        width: 8px;
        height: 8px;
      }
      &::before {
        left: -8px;
        background: radial-gradient(circle at 0 0, #000 7.500px, ${colors.chrome} 8px);
      }
      &::after {
        right: -8px;
        background: radial-gradient(circle at 100% 0, #000 7.500px, ${colors.chrome} 8px);
      }
    `}
`;

const Favicon = styled.span`
  width: 15px;
  margin-right: 6px;
  font: bold 5.800px "DejaVu Sans", sans-serif;
  color: #b9cfe8;
`;

const TabTitle = styled.span`
  flex: none;
  width: 140px;
  margin-right: 9px;
  overflow: hidden;
  white-space: nowrap;
  font-size: 10.200px;
  letter-spacing: -0.450px;
  mask-image: linear-gradient(90deg, #000 88%, transparent 101%);
`;

const NewTab = styled.div`
  display: flex;
  align-items: center;
  margin-left: 11px;
`;

const WindowControls = styled.div`
  display: flex;
  align-items: center;
  margin-left: auto;
`;

const GeminiButton = styled.div`
  display: flex;
  align-items: center;
  gap: 4px;
  width: 68px;
  height: 23px;
  padding-left: 7px;
  border-radius: 8px;
  background: #fafcfc;
  color: #222;
  font-size: 10.500px;
  font-weight: 600;
  letter-spacing: -0.300px;
`;

const ChromeDivider = styled.span<{ $color: string }>`
  width: 1.500px;
  height: 13px;
  margin-left: 7px;
  background: ${({ $color }) => $color};
`;

const WindowButton = styled.div`
  width: 37.800px;
  display: flex;
  justify-content: center;

  ${ChromeDivider} + & {
    margin-left: 6px;
  }
`;

const Toolbar = styled.div`
  ${uiFont}
  flex: none;
  height: 39px;
  display: flex;
  align-items: center;
  padding-left: 3px;
  background: ${colors.chrome};
  border-radius: 7px 7px 0 0;
`;

const ToolIcon = styled.div`
  width: 30px;
  display: flex;
  justify-content: center;
`;

const AddressBar = styled.div`
  width: 1065px;
  height: 28px;
  margin-left: 7px;
  display: flex;
  align-items: center;
  padding: 0 14px 0 4px;
  border-radius: 14px;
  background: #1f2223;
`;

const SiteInfo = styled.div`
  width: 20px;
  height: 20px;
  display: flex;
  align-items: center;
  justify-content: center;
  border-radius: 50%;
  background: #363839;
`;

const Url = styled.div`
  flex: 1;
  margin-left: 7px;
  color: #eee;
  font-size: 11.500px;
  letter-spacing: -0.280px;

  span {
    color: #999;
  }
`;

const ToolbarEnd = styled.div`
  display: flex;
  align-items: center;
  margin-left: 15px;

  ${ChromeDivider} {
    margin: 0 13px 0 13px;
  }
`;

const Avatar = styled.div`
  width: 17px;
  height: 17px;
  margin-right: 20px;
  border-radius: 50%;
  background: #8b6a63;
  color: #f3e4df;
  font-size: 9px;
  line-height: 17px;
  text-align: center;
`;

const BookmarkBar = styled.div`
  ${uiFont}
  flex: none;
  height: 28px;
  display: flex;
  align-items: center;
  justify-content: space-between;
  padding: 0 12px 5px 10px;
  background: ${colors.chrome};
`;

const AllBookmarks = styled.div`
  display: flex;
  align-items: center;
  color: #e6e6e6;
  font-size: 10.400px;
  letter-spacing: -0.450px;

  svg {
    margin: 0 6px 0 13px;
  }
  span:last-child {
    width: 63px;
    white-space: nowrap;
  }
`;

const Viewport = styled.div`
  flex: none;
  height: 567px;
  display: flex;
  overflow: hidden;
`;

const Page = styled.main`
  width: 1267px;
  height: 567px;
  overflow: hidden;
  background: #fff;
  color: ${colors.text};
  font: 11.670px/16.670px "Liberation Sans", Arial, sans-serif;
`;

const Caret = styled.span`
  display: inline-block;
  margin-left: 4.800px;
  vertical-align: middle;
  border: 3.300px solid transparent;
  border-top-color: currentColor;
  border-bottom: 0;
`;

const Link = styled.a<{ $bold?: boolean }>`
  color: ${colors.link};
  font-weight: ${({ $bold }) => ($bold ? "bold" : "normal")};
`;

const HelpLink = styled(Link)`
  padding-top: 1px;
`;

const NavBar = styled.nav`
  height: 43px;
  display: flex;
  align-items: center;
  padding: 1px 33px 0 34px;
  background: ${colors.navy};
  border-bottom: 1px solid #8da9bf;
  color: #fff;
  white-space: nowrap;
`;

const Brand = styled.span`
  width: 88px;
  padding-top: 1px;
  font-size: 15px;
`;

const NavItem = styled.span`
  padding: 1px 7.900px 0;
`;

const NavButtons = styled.div`
  display: flex;
  gap: 7.500px;
  margin-left: auto;
`;

const OutlineButton = styled.button`
  height: 25px;
  padding: 0 8.500px;
  border: 1px solid #b8c9d8;
  border-radius: 3px;
  background: none;
  color: #fff;
  font: inherit;
  font-size: 10px;

  ${Caret} {
    margin-left: 3px;
  }
`;

const Masthead = styled.header`
  height: 68px;
  display: flex;
  align-items: flex-start;
  padding: 2px 33px 0 35px;
  background: #f0f4f5;
`;

const Stat = styled.div<{ $width: number }>`
  flex: none;
  width: ${({ $width }) => $width}px;
  display: flex;
  gap: 6px;
  padding-top: 2px;

  svg + & {
    margin-left: 21px;
  }
`;

const BadgeColumn = styled.div`
  display: flex;
  flex-direction: column;
  gap: 4px;
`;

const Badge = styled.span<{ $size: number; $cyan?: boolean }>`
  flex: none;
  width: ${({ $size }) => $size}px;
  height: ${({ $size }) => $size}px;
  display: flex;
  align-items: center;
  justify-content: center;
  border-radius: 3px;
  background: ${({ $cyan }) => ($cyan ? "#25d9dc" : colors.navy)};
  color: #fff;
`;

const StatText = styled.div`
  padding-top: 1px;
  font-size: 10px;
  line-height: 13.900px;
  white-space: nowrap;

  strong {
    display: block;
    margin-bottom: 2px;
    color: ${colors.link};
    font-size: 10.300px;
  }
`;

const SearchArea = styled.div`
  flex: 1;
`;

const SearchBox = styled.div`
  height: 42px;
  display: flex;
  border-radius: 3px;
  overflow: hidden;
`;

const SearchInput = styled.div`
  flex: 1;
  padding: 10px 8px;
  border: 1px solid #c9cdd0;
  border-right: 0;
  border-radius: 3px 0 0 3px;
  background: #fff;
  color: #757575;
  font-style: italic;
  line-height: 18px;
`;

const CsmToggle = styled.label`
  width: 104px;
  display: flex;
  align-items: center;
  gap: 6px;
  padding: 0 0 1px 9px;
  background: #9ae5e1;
  white-space: nowrap;

  abbr {
    border-bottom: 1px dotted #333;
  }
`;

const Checkbox = styled.span`
  width: 14px;
  height: 14px;
  border: 1px solid #444;
  border-radius: 2px;
  background: #fff;
`;

const SearchButton = styled.button`
  width: 42px;
  display: flex;
  align-items: center;
  justify-content: center;
  padding: 0 0 1px;
  border: 0;
  background: ${colors.navy};
  color: #fff;
`;

const SearchLinks = styled.div`
  display: flex;
  justify-content: space-between;
  margin-top: 2px;
  padding-left: 3.500px;
  font-size: 10px;
`;

const PartnerBar = styled.div`
  height: 38px;
  display: flex;
  align-items: flex-end;
  justify-content: space-between;
  padding: 0 33px 0 35px;
  background: #e4e4e4;
  border-bottom: 6px solid ${colors.navy};
`;

const Partners = styled.div`
  height: 32px;
  display: flex;
  align-items: center;
  gap: 14px;
  padding-bottom: 1px;
`;

const Social = styled.div`
  width: 112px;
  height: 19px;
  display: flex;
  align-items: center;
  justify-content: space-between;
  padding: 1px 6px 0 4px;
  border-radius: 4px 4px 0 0;
  background: ${colors.navy};
  color: #fff;
  font-size: 15.500px;
`;

const PageTabs = styled.div`
  height: 46px;
  display: flex;
  align-items: flex-end;
  gap: 1.600px;
  margin: 0 33px 0 34px;
  padding-top: 17px;
  border-bottom: 4px solid ${colors.navy};
`;

const PageTab = styled.div<{ $active: boolean; $width: number }>`
  width: ${({ $width }) => $width}px;
  height: 25px;
  border-radius: 3px 3px 0 0;
  background: ${({ $active }) => ($active ? colors.navy : "#efeeef")};
  color: ${({ $active }) => ($active ? "#fff" : colors.link)};
  line-height: 24.500px;
  text-align: center;
`;

const Entry = styled.section`
  display: flex;
  padding: 17px 33px 0 34px;
`;

const Viewer = styled.div`
  flex: none;
  width: 383px;
  height: 356px;
  border: 1px solid #dcdcdc;
`;

const ViewerHeader = styled.div`
  height: 41px;
  display: flex;
  align-items: center;
  justify-content: space-between;
  padding: 6px 9px 0;
  background: #626b71;
  color: #fff;
  font-size: 12.300px;

  span {
    padding-bottom: 7px;
  }
  span svg {
    margin-left: 3px;
    vertical-align: -1.500px;
  }
`;

const ExpandButton = styled.div`
  width: 19px;
  height: 18px;
  display: flex;
  align-items: center;
  justify-content: center;
  margin: 3px 3px 0 auto;
  border: 1px solid #ccc;
  border-radius: 2px;
`;

const ProteinFrame = styled.div`
  margin: 5px 0 0 45px;
`;

const Details = styled.div`
  width: 792px;
  margin-left: 25px;
`;

const FileActions = styled.div`
  display: flex;
  justify-content: flex-end;
  gap: 1px;
  font-size: 10px;
`;

const FileGroup = styled.div`
  display: flex;
  border-radius: 3px;
  overflow: hidden;
`;

const FileButton = styled.div<{ $width: number }>`
  width: ${({ $width }) => $width}px;
  height: 25px;
  background: ${colors.navy};
  border: 1px solid #2c4d6c;
  color: #fff;
  line-height: 22px;
  text-align: center;
  white-space: nowrap;

  svg {
    margin-right: -2.500px;
    vertical-align: -1px;
  }
  ${Caret} {
    margin-left: 0;
  }
`;

const PlainButton = styled.div<{ $width: number; $height: number }>`
  width: ${({ $width }) => $width}px;
  height: ${({ $height }) => $height}px;
  border: 1px solid #d2d2d2;
  border-radius: 2px;
  font-size: 10px;
  line-height: ${({ $height }) => $height - 2.5}px;
  text-align: center;
  white-space: nowrap;

  svg {
    margin-right: -1px;
    vertical-align: -1.500px;
  }
`;

const EntryTitle = styled.h1`
  height: 33px;
  display: flex;
  align-items: center;
  margin: 16px 0 0;
  font-size: 30px;
  font-weight: normal;
  line-height: 33px;

  > svg {
    margin: 0 0 10px 5px;
  }
`;

const EntryId = styled.span`
  position: relative;
  margin-left: 8.700px;

  mark {
    display: inline-block;
    height: 33px;
    background: #3a63c4;
    color: #fff;
  }
`;

const TextCursor = styled.span`
  position: absolute;
  left: 26px;
  top: 11px;
  display: flex;
`;

const Bar = styled.span`
  width: 2px;
  height: 27px;
  margin: 4px 19.500px 0 18px;
  background: #d3d3d3;
`;

const Subtitle = styled.h4`
  margin: 7px 0 0;
  font-size: 15px;
  font-weight: normal;
  line-height: 17px;
`;

const Block = styled.div<{ $gap: number }>`
  padding-top: 8.500px;
  margin-bottom: ${({ $gap }) => $gap - 8.5}px;
`;

const Line = styled.div`
  height: 16.670px;
  white-space: nowrap;
`;

const InfoIcon = styled(FaCircleInfo)`
  font-size: 11.500px;
  margin-left: 0.500px;
  vertical-align: -1px;
`;

const Snapshot = styled.div`
  display: flex;
  margin-top: 8.500px;
  border-top: 1px solid #e3e3e3;
`;

const Experiment = styled.div`
  width: 340px;
  padding-top: 8.500px;
`;

const SectionTitle = styled.div`
  margin-bottom: 8px;
  font-weight: bold;
`;

const Validation = styled.div`
  width: 452px;
  padding-top: 8px;
`;

const ValidationHeader = styled.div`
  height: 18px;
  display: flex;
  align-items: center;
  gap: 7px;
`;

const Reports = styled.div`
  display: flex;
  gap: 3px;
  margin-left: auto;
`;

const ChartBox = styled.div`
  height: 120px;
  margin-top: 7px;
  border: 1px solid #e0e0e0;
`;

const VScroll = styled.div`
  width: 13px;
  display: flex;
  flex-direction: column;
  align-items: center;
  padding: 4px 0;
  background: #fafafa;
`;

const VThumb = styled.div`
  width: 7px;
  height: 85px;
  margin: 6px 0 auto;
  border-radius: 4px;
  background: #8a8a8a;
`;

const HScroll = styled.div`
  flex: none;
  height: 13px;
  display: flex;
  align-items: center;
  padding: 0 17px 0 4px;
  background: #fafafa;
`;

const HThumb = styled.div`
  width: 1196px;
  height: 7px;
  margin: 0 auto 0 5px;
  border-radius: 4px;
  background: #8a8a8a;
`;

const TaskbarRoot = styled.footer`
  ${uiFont}
  flex: none;
  height: 40px;
  display: flex;
  align-items: center;
  border-top: 1px solid #c4c2c0;
  background: linear-gradient(
    90deg,
    #d9d9d9 0,
    #dadada 240px,
    #f0e0da 340px,
    #f5e1d9 480px,
    #efdfe0 560px,
    #f0e3d8 680px,
    #f2e6dc 900px,
    #e2dfdb 1000px,
    #dcdcdc 1060px
  );
  color: #2b2b2b;
  font-size: 10.500px;
`;

const Weather = styled.div`
  width: 155px;
  height: 33px;
  margin-right: 18.500px;
  padding-left: 18.500px;
`;

const TaskSearch = styled.div`
  width: 183px;
  height: 25px;
  display: flex;
  align-items: center;
  gap: 8px;
  margin: 0 1.500px 0 11.500px;
  padding-left: 9px;
  border-radius: 13px;
  background: #fbf8f6;
  box-shadow: 0 0 0 0.5px #ddd5d0;
  color: #666;
  font-size: 11.500px;
  letter-spacing: -0.200px;
`;

const TaskItem = styled.div<{ $active?: boolean; $running?: boolean }>`
  position: relative;
  flex: none;
  width: 36.600px;
  height: 32px;
  display: flex;
  align-items: center;
  justify-content: center;
  background: ${({ $active }) =>
    $active ? "linear-gradient(#faf3ef, #faf3ef) center / 31px 31px no-repeat" : "none"};

  ${({ $active, $running }) =>
    ($active || $running) &&
    css`
      &::after {
        content: "";
        position: absolute;
        bottom: 0;
        width: ${$active ? 13 : 5}px;
        height: 2px;
        border-radius: 1px;
        background: ${$active ? "#dd8a27" : "#8d8783"};
      }
    `}
`;

const Tray = styled.div`
  display: flex;
  align-items: center;
  margin-left: auto;
  padding-right: 17px;
`;

const TrayCell = styled.div<{ $width: number }>`
  width: ${({ $width }) => $width}px;
  display: flex;
  justify-content: center;
  font-size: 10px;
  letter-spacing: -0.200px;
`;

const Clock = styled.div`
  width: 54px;
  margin-right: 7px;
  font-size: 10.300px;
  letter-spacing: -0.450px;
  line-height: 13px;
  text-align: right;
`;

export default App;
